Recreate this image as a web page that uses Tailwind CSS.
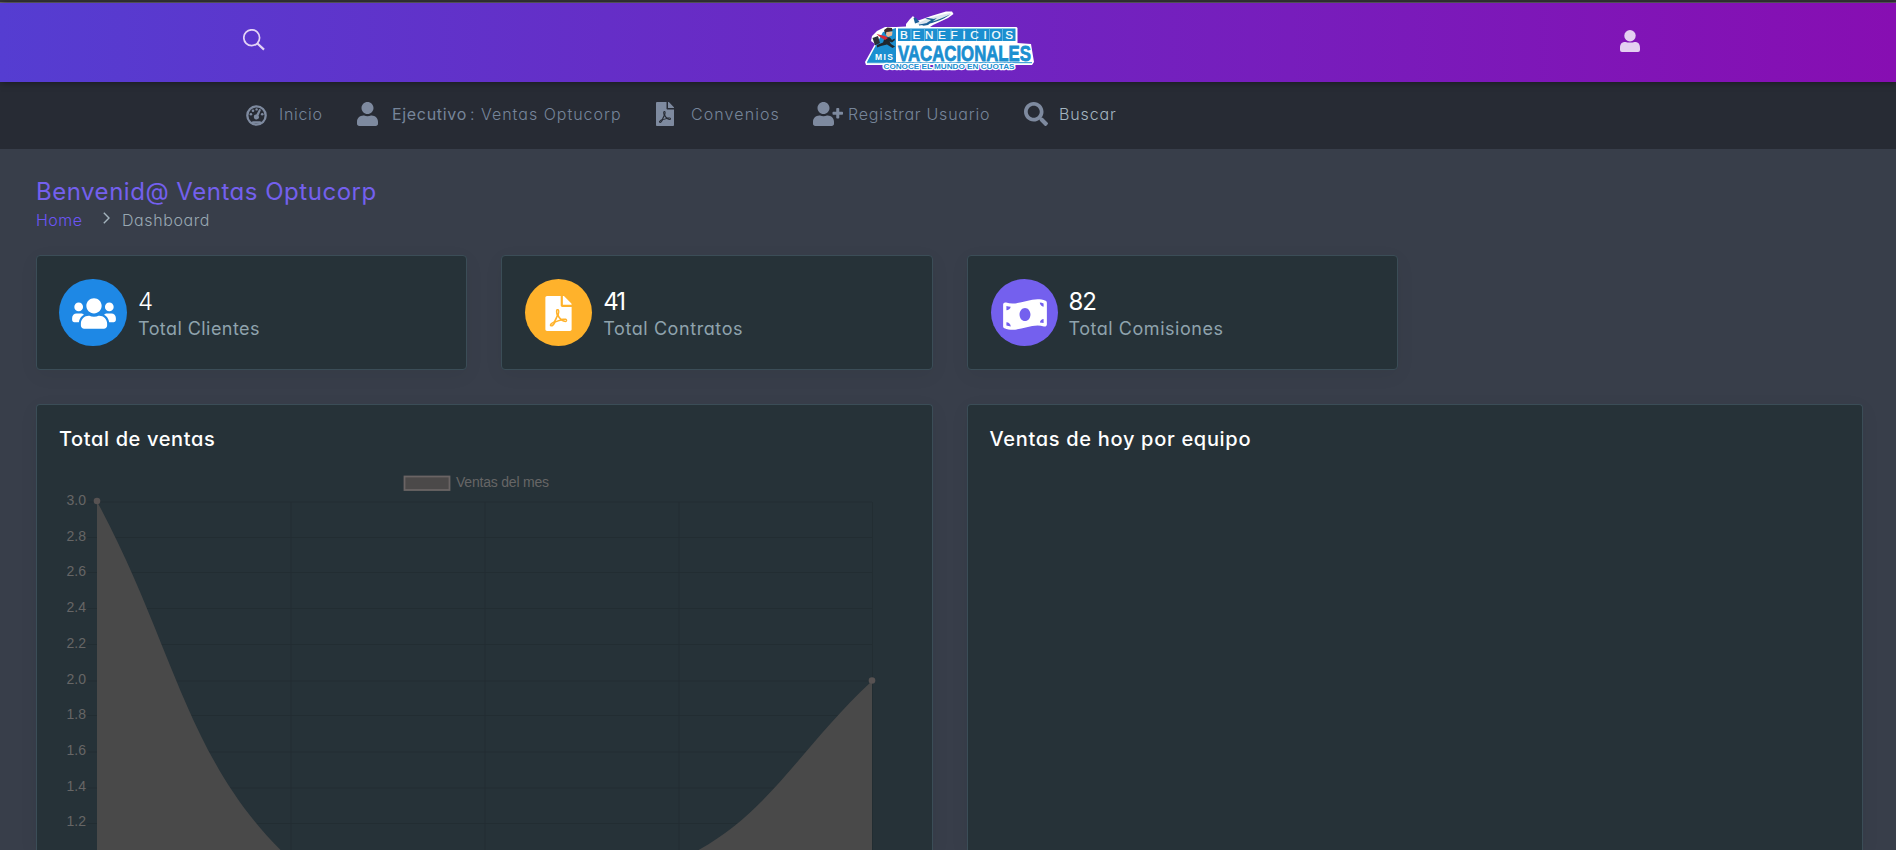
<!DOCTYPE html>
<html lang="es">
<head>
<meta charset="utf-8">
<title>Dashboard</title>
<script src="https://cdn.jsdelivr.net/npm/@tailwindcss/browser@4"></script>
</head>
<body class="h-[850px] overflow-hidden bg-[#383e4a] font-['Inter',sans-serif] font-light [font-feature-settings:'cv11'] flex flex-col">
<svg class="hidden">
  <symbol id="user" viewBox="0 0 448 512"><path d="M224 256c70.7 0 128-57.3 128-128S294.7 0 224 0 96 57.3 96 128s57.3 128 128 128zm89.6 32h-16.7c-22.2 10.2-46.9 16-72.9 16s-50.6-5.8-72.9-16h-16.7C60.2 288 0 348.2 0 422.4V464c0 26.5 21.5 48 48 48h352c26.5 0 48-21.5 48-48v-41.6c0-74.2-60.2-134.4-134.4-134.4z"/></symbol>
  <symbol id="pdf" viewBox="0 0 384 512"><path d="M181.9 256.1c-5-16-4.9-46.9-2-46.9 8.4 0 7.6 36.9 2 46.9zm-1.7 47.2c-7.7 20.2-17.3 43.3-28.4 62.7 18.3-7 39-17.2 62.9-21.9-12.7-9.6-24.9-23.4-34.5-40.8zM86.1 428.1c0 .8 13.2-5.4 34.9-40.2-6.7 6.3-29.1 24.5-34.9 40.2zM248 160h136v328c0 13.3-10.7 24-24 24H24c-13.3 0-24-10.7-24-24V24C0 10.7 10.7 0 24 0h200v136c0 13.2 10.8 24 24 24zm-8 171.8c-20-12.2-33.3-29-42.7-53.8 4.500-18.500 11.600-46.600 6.200-64.200-4.700-29.400-42.400-26.500-47.800-6.800-5 18.300-.4 44.100 8.100 77-11.600 27.600-28.700 64.600-40.800 85.800-.1 0-.1.1-.2.1-27.100 13.900-73.600 44.500-54.500 68 5.600 6.900 16 10 21.500 10 17.900 0 35.700-18 61.100-61.800 25.800-8.500 54.100-19.100 79-23.200 21.700 11.800 47.100 19.500 64 19.500 29.200 0 31.200-32 19.700-43.400-13.900-13.600-54.300-9.700-73.600-7.200zM377 105L279 7c-4.500-4.500-10.600-7-17-7h-6v128h128v-6.100c0-6.300-2.500-12.400-7-16.900zm-74.100 255.300c4.100-2.700-2.500-11.900-42.800-9 37.100 15.800 42.800 9 42.800 9z"/></symbol>
</svg>

<div class="h-[3px] shrink-0 bg-[#363639] border-b border-[#68666e]"></div>
<header class="relative z-10 h-[79px] shrink-0 bg-[linear-gradient(to_right,#553dd1,#870eb2)] shadow-[1px_0_7px_rgba(0,0,0,0.5)] flex justify-between pl-[242px] pr-[256px]">
  <svg class="mt-[26px] ml-[1px] w-[22px] h-[22px]" viewBox="0 0 22 22" fill="none" stroke="#e4d4f6"><circle cx="8.700" cy="8.700" r="7.900" stroke-width="1.700"/><path d="M14.200 14.200L21 20.600" stroke-width="2.200"/></svg>
  <svg class="mt-[7px] ml-[14px] w-[176px] h-[66px] overflow-visible" viewBox="862 10 176 66" font-family="Liberation Sans, sans-serif" font-weight="700">
    <path d="M906 24L910 19 913 16 917 21 931 16 946 11.500 952 11.500 953.500 14 948 18 933 25 930 27 1016.500 27 1017.500 28 1017.500 43 1031 44 1034 62 1032 65 866 65 865 62 875 44 871 41 872 36 877 31 885 27 896 27 906 26.500Z" fill="#fff"/>
    <path d="M867 62L883 32 896 28V62Z" fill="#1b8fd0"/>
    <path d="M917 24C922 20 938 15 950 13L951 14.500C946 18 928 24 919 25Z" fill="#dce6ed"/>
    <path d="M913.500 18L915.500 17.500 919.500 22 915 23.500ZM922 26L932 19.500 937 18 928 25ZM925 18.500L928 18 934 19 931 20ZM919 24.500C931 23 943 18 950 14.500 944 19.500 930 24.500 919 25.500Z" fill="#1b5f96"/>
    <path d="M898 28.500H1015.500V41H898Z" fill="#1b8fd0"/>
    <path d="M911 28.500V41M924.500 28.500V41M937.500 28.500V41M951 28.500V41M964 28.500V41M976.500 28.500V41M989.500 28.500V41M1002.500 28.500V41" stroke="#75bce3" stroke-width=".8"/>
    <text x="900" y="38.800" font-size="11.700" fill="#fff" stroke="#fff" stroke-width=".2" font-weight="400" textLength="113">BENEFICIOS</text>
    <text x="898" y="61.200" font-size="22" fill="#1b8fd0" stroke="#1b8fd0" stroke-width=".8" textLength="133" lengthAdjust="spacingAndGlyphs">VACACIONALES</text>
    <path d="M867 62.700H1032" stroke="#1b8fd0" stroke-width="1"/>
    <text x="875" y="60" font-size="8.500" fill="#fff" textLength="18">MIS</text>
    <text x="883.500" y="69" font-size="7" fill="#1b8fd0" stroke="#fff" stroke-width="2.400" stroke-linejoin="round" paint-order="stroke" textLength="131" lengthAdjust="spacingAndGlyphs">CONOCE EL MUNDO EN CUOTAS</text>
    <path d="M872.500 38L878 36 880 43 875 45.500Z" fill="#2a3138"/>
    <path d="M885 37L890 37.500 892 40 894.500 38.500 895 40 892 42.500 889.500 41.500 891 44 895 46.500 892.500 48 887 44.500 881 46 877 47.500 877 45 883 42.500Z" fill="#20272e"/>
    <path d="M884 30L887.500 27.500 892 28 892.500 31 886 32.500 885.500 35Z" fill="#3a2b2b"/>
    <path d="M886.500 32L892.500 31.500 892 35.500 888 37 886 35Z" fill="#e9b894"/>
    <path d="M876.500 34L885 36 888 38 885 40 880 37Z" fill="#d92a35"/>
  </svg>
  <svg class="mt-[27px] w-[20px] h-[22px]" viewBox="0 0 20 22" fill="#e4cff1"><circle cx="10" cy="5.700" r="5.700"/><path d="M0 18C0 13.500 2 11.900 5.500 11.900 8 12.800 12 12.800 14.500 11.900 18 11.900 20 13.500 20 18V20Q20 22 18 22H2Q0 22 0 20Z"/></svg>
</header>

<nav class="h-[67px] shrink-0 bg-[#272b34] text-base text-[#76859a] pl-[246px] pb-[3px] flex items-center">
  <svg class="w-[21px] h-[21px] mt-[2px]" viewBox="0 0 21 21" fill="#7e8a9f"><circle cx="10.500" cy="10.500" r="9.200" fill="none" stroke="#7e8a9f" stroke-width="2.300"/><circle cx="4.900" cy="9.200" r="1.300"/><circle cx="7" cy="5.700" r="1.300"/><circle cx="10.600" cy="4.400" r="1.200"/><circle cx="16.200" cy="9.200" r="1.300"/><path d="M13.300 4L15 4.800 12.500 10.700A2.500 2.500 0 1 1 10.300 9.500Z"/><path d="M6.700 16.300H14.300L16.800 18.500H4.200Z"/></svg>
  <span class="ml-[12px] w-[43px] tracking-[0.7px] whitespace-nowrap">Inicio</span>
  <svg class="ml-[35px] w-[21px] h-6" fill="#7e8a9f"><use href="#user"/></svg>
  <span class="ml-[14px] w-[231px] whitespace-nowrap"><span class="font-normal tracking-[0.68px]">Ejecutivo</span><span class="tracking-[1px] ml-[3px]">: Ventas Optucorp</span></span>
  <svg class="ml-[33px] w-[18px] h-6" fill="#7e8a9f"><use href="#pdf"/></svg>
  <span class="ml-[17px] w-[88px] tracking-[1.1px] whitespace-nowrap">Convenios</span>
  <svg class="ml-[34px] w-[30px] h-6" viewBox="0 0 640 512" fill="#7e8a9f"><path d="M624 208h-64v-64c0-8.800-7.200-16-16-16h-32c-8.800 0-16 7.200-16 16v64h-64c-8.800 0-16 7.200-16 16v32c0 8.800 7.200 16 16 16h64v64c0 8.800 7.200 16 16 16h32c8.800 0 16-7.200 16-16v-64h64c8.800 0 16-7.200 16-16v-32c0-8.800-7.200-16-16-16z"/><use href="#user" width="448" height="512"/></svg>
  <span class="ml-[5px] w-[141px] tracking-[0.76px] whitespace-nowrap">Registrar Usuario</span>
  <svg class="ml-[35px] w-6 h-6" viewBox="0 0 512 512" fill="#7e8a9f"><path d="M505 442.700L405.300 343c-4.500-4.500-10.600-7-17-7H372c27.600-35.300 44-79.700 44-128C416 93.100 322.900 0 208 0S0 93.100 0 208s93.100 208 208 208c48.300 0 92.700-16.400 128-44v16.300c0 6.400 2.500 12.500 7 17l99.700 99.700c9.400 9.400 24.600 9.400 33.900 0l28.300-28.300c9.400-9.400 9.400-24.600.1-34zM208 336c-70.700 0-128-57.200-128-128 0-70.700 57.200-128 128-128 70.700 0 128 57.200 128 128 0 70.700-57.200 128-128 128z"/></svg>
  <span class="ml-[11px] tracking-[0.86px] text-[#a3b5c0]">Buscar</span>
</nav>

<main class="pl-[36px] pr-[33px] pt-[28px]">
  <h1 class="text-2xl leading-[30px] font-normal tracking-[0.52px] text-[#7460ee]">Benvenid@ Ventas Optucorp</h1>
  <div class="flex items-center h-[26px] text-base leading-[26px] text-[#98a8b2]">
    <a class="w-[47px] tracking-[0.5px] text-[#6c55f5]">Home</a>
    <svg class="ml-[20px] -mt-[5px] w-[7px] h-[12px]" viewBox="0 0 7 12" fill="none" stroke="#a4b4be" stroke-width="1.400"><path d="M.8.800L6 6 .8 11.200"/></svg>
    <span class="ml-[12px] tracking-[0.6px]">Dashboard</span>
  </div>

  <div class="mt-[22px] grid grid-cols-4 gap-x-[34px] gap-y-[34px]">
    <section class="h-[115px] rounded-[4px] border border-[#3b4d57] bg-[#263238] shadow-[0_5px_20px_rgba(0,0,0,0.05)] flex items-start pl-[22px] pt-[23px]">
      <div class="w-[68px] h-[67px] rounded-full bg-[#1e88e5] flex items-center justify-center"><svg class="w-[44px] h-[35px] mt-[2px] ml-[1px]" viewBox="0 0 640 512" fill="#fff"><path d="M96 224c35.300 0 64-28.700 64-64s-28.700-64-64-64-64 28.700-64 64 28.700 64 64 64zm448 0c35.300 0 64-28.700 64-64s-28.700-64-64-64-64 28.700-64 64 28.700 64 64 64zm32 32h-64c-17.600 0-33.500 7.100-45.100 18.600 40.300 22.100 68.900 62 75.100 109.400h66c17.700 0 32-14.300 32-32v-32c0-35.300-28.700-64-64-64zm-256 0c61.900 0 112-50.100 112-112S381.900 32 320 32 208 82.100 208 144s50.100 112 112 112zm76.800 32h-8.300c-20.800 10-43.900 16-68.500 16s-47.600-6-68.500-16h-8.300C179.600 288 128 339.600 128 403.200V432c0 26.500 21.500 48 48 48h288c26.500 0 48-21.500 48-48v-28.800c0-63.600-51.600-115.200-115.200-115.200zm-223.700-13.400C161.500 263.100 145.600 256 128 256H64c-35.300 0-64 28.700-64 64v32c0 17.700 14.300 32 32 32h65.900c6.300-47.400 34.900-87.300 75.200-109.400z"/></svg></div>
      <div class="ml-[11px] mt-[9px]"><div class="text-2xl leading-[28px] font-light text-white">4</div><div class="text-lg leading-[26px] font-normal tracking-[0.43px] text-[#8fa3ad]">Total Clientes</div></div>
    </section>
    <section class="h-[115px] rounded-[4px] border border-[#3b4d57] bg-[#263238] shadow-[0_5px_20px_rgba(0,0,0,0.05)] flex items-start pl-[23px] pt-[23px]">
      <div class="w-[67px] h-[67px] rounded-full bg-[#ffb22b] flex items-center justify-center"><svg class="w-[27px] h-[35px] mt-[2px]" fill="#fff"><use href="#pdf"/></svg></div>
      <div class="ml-[11px] mt-[9px]"><div class="text-2xl leading-[28px] font-normal tracking-[-2px] text-white">41</div><div class="text-lg leading-[26px] font-normal tracking-[0.58px] text-[#8fa3ad]">Total Contratos</div></div>
    </section>
    <section class="h-[115px] rounded-[4px] border border-[#3b4d57] bg-[#263238] shadow-[0_5px_20px_rgba(0,0,0,0.05)] flex items-start pl-[23px] pt-[23px]">
      <div class="w-[67px] h-[67px] rounded-full bg-[#7460ee] flex items-center justify-center"><svg class="w-[44px] h-[35px] mt-[3px] ml-[2px]" viewBox="0 0 640 512" fill="#fff"><path d="M621.160 54.460C582.370 38.190 543.550 32 504.750 32c-123.170-.01-246.330 62.340-369.500 62.340-30.890 0-61.760-3.920-92.650-13.720-3.470-1.100-6.950-1.620-10.350-1.620C15.040 79 0 92.320 0 110.810v317.260c0 12.630 7.230 24.600 18.840 29.460C57.630 473.810 96.450 480 135.250 480c123.170 0 246.340-62.350 369.510-62.350 30.890 0 61.760 3.920 92.650 13.720 3.470 1.100 6.950 1.620 10.350 1.620 17.210 0 32.250-13.320 32.250-31.810V83.930c-.01-12.640-7.240-24.600-18.850-29.470zM48 132.220c20.120 5.040 41.120 7.570 62.720 8.930C104.840 170.540 79 192.690 48 192.690v-60.470zm0 285v-47.780c34.370 0 62.180 27.270 63.710 61.400-22.530-1.810-43.590-6.310-63.710-13.620zM320 352c-44.190 0-80-42.990-80-96 0-53.020 35.820-96 80-96s80 42.980 80 96c0 53.030-35.830 96-80 96zm272 27.780c-17.520-4.390-35.710-6.850-54.320-8.440 5.870-26.080 27.500-45.880 54.320-49.280v57.720zm0-236.110c-30.890-3.910-54.860-29.700-55.810-61.550 19.540 2.170 38.090 6.230 55.810 12.660v48.890z"/></svg></div>
      <div class="ml-[11px] mt-[9px]"><div class="text-2xl leading-[28px] font-normal tracking-[-1px] text-white">82</div><div class="text-lg leading-[26px] font-normal tracking-[0.53px] text-[#8fa3ad]">Total Comisiones</div></div>
    </section>
    <div></div>

    <section class="col-span-2 h-[446px] rounded-t-[4px] border border-b-0 border-[#3b4d57] bg-[#263238] shadow-[0_5px_20px_rgba(0,0,0,0.05)] pt-[19px]">
      <h2 class="pl-[22px] text-xl leading-[30px] font-medium tracking-[0.62px] text-white">Total de ventas</h2>
      <svg class="mt-[16px] w-[894px] h-[380px]" viewBox="37 470 894 380" font-family="Liberation Sans, Arial, sans-serif" fill="#666">
        <g stroke="#222d32" stroke-width="1"><path d="M87 502H872M87 537.500H872M87 572.500H872M87 608.500H872M87 644.500H872M87 681H872M87 715.500H872M87 752H872M87 788H872M87 823.500H872M291 502V850M485 502V850M679 502V850M872.500 502V850"/></g>
        <path d="M97 501.500C174.600 644.900 185.900 762.800 291 860C352 892 420 892 485 860C560 882 590 896 679 860C768 818.800 794.800 752.600 872 681V1040H97Z" fill="#494949"/>
        <circle cx="97" cy="501" r="3.300" fill="#575252"/><circle cx="872" cy="680.500" r="3.300" fill="#575252"/>
        <rect x="404.500" y="476.500" width="45" height="13.500" fill="#4b4949" stroke="#6a6464" stroke-width="1.800"/>
        <text x="456" y="486.500" font-size="14" textLength="93">Ventas del mes</text>
        <g font-size="14" text-anchor="end"><text x="86" y="505">3.0</text><text x="86" y="541">2.8</text><text x="86" y="576">2.6</text><text x="86" y="612">2.4</text><text x="86" y="648">2.2</text><text x="86" y="684">2.0</text><text x="86" y="718.500">1.8</text><text x="86" y="755">1.6</text><text x="86" y="791">1.4</text><text x="86" y="826">1.2</text></g>
      </svg>
    </section>
    <section class="col-span-2 h-[446px] rounded-t-[4px] border border-b-0 border-[#3b4d57] bg-[#263238] shadow-[0_5px_20px_rgba(0,0,0,0.05)] pt-[19px]">
      <h2 class="pl-[22px] text-xl leading-[30px] font-medium tracking-[0.69px] text-white">Ventas de hoy por equipo</h2>
    </section>
  </div>
</main>
</body>
</html>
